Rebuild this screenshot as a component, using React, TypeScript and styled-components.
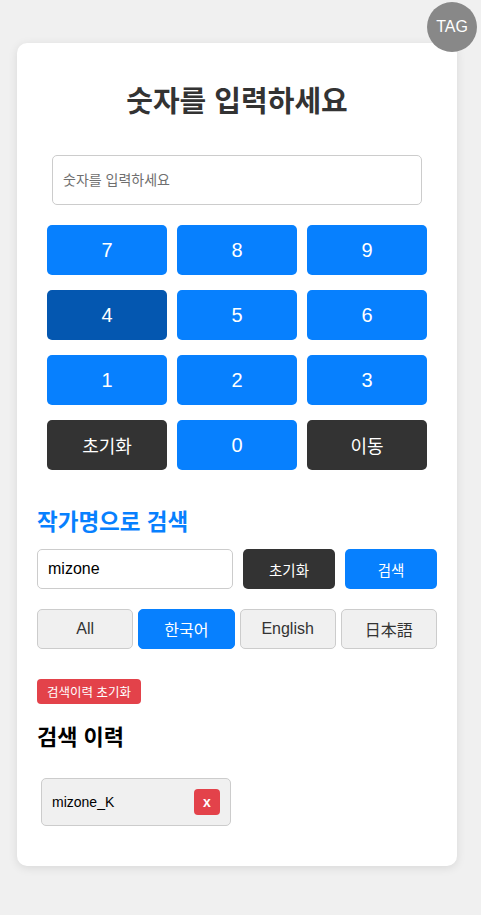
import React, { useState } from "react";
import styled, { createGlobalStyle } from "styled-components";

const GlobalStyle = createGlobalStyle`
  html, body { margin: 0; padding: 0; background: #f0f0f0; }
  body { font-family: "Liberation Sans", Arial, "Noto Sans CJK KR", sans-serif; }
  * { box-sizing: border-box; }
`;

const Page = styled.div`
  min-height: 915px;
  padding: 43px 0 0 17px;
`;

const Tag = styled.div`
  position: fixed;
  top: 2px;
  left: 427px;
  width: 50px;
  height: 50px;
  border-radius: 50%;
  background: #888888;
  color: #fff;
  font-size: 16px;
  display: flex;
  align-items: center;
  justify-content: center;
  z-index: 2;
`;

const Card = styled.div`
  width: 440px;
  background: #fff;
  border-radius: 10px;
  box-shadow: 0 2px 10px rgba(0, 0, 0, 0.1);
  padding: 20px;
  display: flex;
  flex-direction: column;
`;

const Title = styled.h1`
  margin: 19px 0 33px;
  font-size: 29px;
  line-height: 40px;
  font-weight: 700;
  color: #333;
  text-align: center;
  font-family: "Liberation Sans", "Noto Sans CJK KR", sans-serif;
`;

const NumberInput = styled.input`
  display: block;
  width: 370px;
  height: 50px;
  margin: 0 auto 20px;
  border: 1px solid #ccc;
  border-radius: 5px;
  padding: 0 10px;
  font-size: 14px;
  font-family: "Liberation Sans", "Noto Sans CJK KR", sans-serif;
  color: #333;
  outline: none;
  &::placeholder { color: #6f6f6f; }
`;

const Keypad = styled.div`
  width: 380px;
  margin: 0 auto;
  display: grid;
  grid-template-columns: repeat(3, 120px);
  grid-auto-rows: 50px;
  column-gap: 10px;
  row-gap: 15px;
`;

const Key = styled.button<{ $variant?: "blue" | "dark" | "pressed" }>`
  border: none;
  border-radius: 5px;
  color: #fff;
  font-family: "Liberation Sans", "Noto Sans CJK KR", sans-serif;
  font-size: ${(p) => (p.$variant === "dark" ? "18px" : "20px")};
  background: ${(p) =>
    p.$variant === "dark" ? "#333333" : p.$variant === "pressed" ? "#0457b0" : "#0780fe"};
  cursor: pointer;
  display: flex;
  align-items: center;
  justify-content: center;
  padding: 0;
`;

const SectionTitle = styled.h2`
  margin: 38px 0 11px;
  font-size: 22.5px;
  line-height: 30px;
  font-weight: 700;
  color: #0780fe;
  font-family: "Liberation Sans", "Noto Sans CJK KR", sans-serif;
`;

const SearchRow = styled.div`
  display: flex;
  gap: 10px;
  height: 40px;
`;

const SearchInput = styled.input`
  flex: 1;
  min-width: 0;
  height: 40px;
  border: 1px solid #ccc;
  border-radius: 5px;
  padding: 0 10px;
  font-size: 16px;
  font-family: "Liberation Sans", sans-serif;
  color: #000;
  outline: none;
`;

const ActionButton = styled.button<{ $dark?: boolean }>`
  width: 92px;
  height: 40px;
  border: none;
  border-radius: 5px;
  color: #fff;
  background: ${(p) => (p.$dark ? "#333333" : "#0780fe")};
  font-size: 14.5px;
  font-family: "Liberation Sans", "Noto Sans CJK KR", sans-serif;
  padding: 0;
`;

const LangRow = styled.div`
  display: flex;
  gap: 5px;
  margin-top: 20px;
`;

const LangButton = styled.button<{ $active?: boolean }>`
  flex: 1;
  height: 40px;
  border-radius: 5px;
  border: 1px solid ${(p) => (p.$active ? "#0780fe" : "#ccc")};
  background: ${(p) => (p.$active ? "#0780fe" : "#f0f0f0")};
  color: ${(p) => (p.$active ? "#fff" : "#333")};
  font-size: 16px;
  font-family: "Liberation Sans", "Noto Sans CJK KR", "Noto Sans CJK JP", sans-serif;
  padding: 0;
`;

const ClearHistory = styled.button`
  align-self: flex-start;
  margin-top: 30px;
  height: 25px;
  padding: 0 10px;
  border: none;
  border-radius: 4px;
  background: #e3424a;
  color: #fff;
  font-size: 12.5px;
  font-family: "Liberation Sans", "Noto Sans CJK KR", sans-serif;
`;

const HistoryTitle = styled.h3`
  margin: 19px 0 25px;
  font-size: 22px;
  line-height: 30px;
  font-weight: 700;
  color: #000;
  font-family: "Liberation Sans", "Noto Sans CJK KR", sans-serif;
`;

const HistoryList = styled.div`
  display: flex;
  flex-wrap: wrap;
  gap: 8px;
  margin: 0 0 20px 4px;
`;

const HistoryItem = styled.div`
  width: 190px;
  height: 48px;
  border: 1px solid #ccc;
  border-radius: 5px;
  background: #f0f0f0;
  padding: 0 10px;
  display: flex;
  align-items: center;
  justify-content: space-between;
  font-size: 14px;
  color: #000;
`;

const RemoveButton = styled.button`
  width: 26px;
  height: 26px;
  border: none;
  border-radius: 4px;
  background: #e3424a;
  color: #fff;
  font-size: 14px;
  font-weight: 700;
  font-family: "Liberation Sans", sans-serif;
  padding: 0;
  display: flex;
  align-items: center;
  justify-content: center;
`;

const keys: { label: string; variant?: "blue" | "dark" | "pressed" }[] = [
  { label: "7" }, { label: "8" }, { label: "9" },
  { label: "4", variant: "pressed" }, { label: "5" }, { label: "6" },
  { label: "1" }, { label: "2" }, { label: "3" },
  { label: "초기화", variant: "dark" }, { label: "0" }, { label: "이동", variant: "dark" },
];

const langs = ["All", "한국어", "English", "日本語"];

export default function App() {
  const [query, setQuery] = useState("mizone");
  const [lang, setLang] = useState("한국어");
  return (
    <>
      <GlobalStyle />
      <Page>
        <Tag>TAG</Tag>
        <Card>
          <Title>숫자를 입력하세요</Title>
          <NumberInput placeholder="숫자를 입력하세요" />
          <Keypad>
            {keys.map((k) => (
              <Key key={k.label} $variant={k.variant}>{k.label}</Key>
            ))}
          </Keypad>
          <SectionTitle>작가명으로 검색</SectionTitle>
          <SearchRow>
            <SearchInput value={query} onChange={(e) => setQuery(e.target.value)} />
            <ActionButton $dark>초기화</ActionButton>
            <ActionButton>검색</ActionButton>
          </SearchRow>
          <LangRow>
            {langs.map((l) => (
              <LangButton key={l} $active={l === lang} onClick={() => setLang(l)}>{l}</LangButton>
            ))}
          </LangRow>
          <ClearHistory>검색이력 초기화</ClearHistory>
          <HistoryTitle>검색 이력</HistoryTitle>
          <HistoryList>
            <HistoryItem>
              <span>mizone_K</span>
              <RemoveButton>x</RemoveButton>
            </HistoryItem>
          </HistoryList>
        </Card>
      </Page>
    </>
  );
}
